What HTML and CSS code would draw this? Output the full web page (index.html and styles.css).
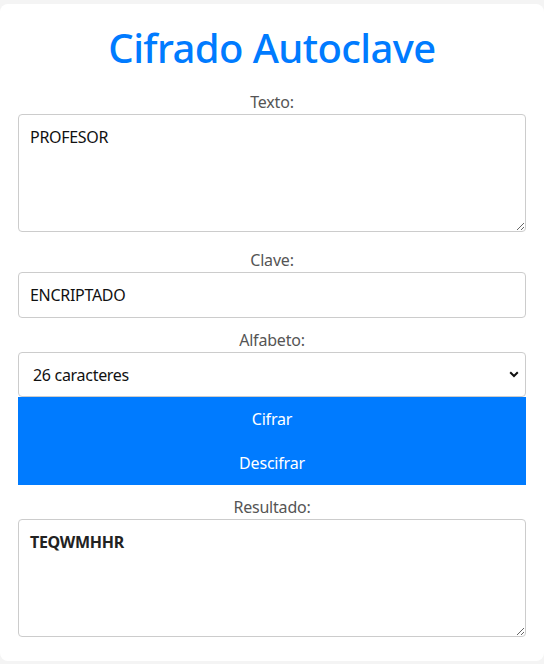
FILE: index.html
```html
<!DOCTYPE html>
<html lang="es">
<head>
<meta charset="utf-8">
<title>Cifrado Autoclave</title>
<link rel="stylesheet" href="styles.css">
</head>
<body>
<main class="card">
  <h1 class="title">Cifrado Autoclave</h1>
  <label class="label" for="texto">Texto:</label>
  <textarea id="texto" class="field area">PROFESOR</textarea>
  <label class="label" for="clave">Clave:</label>
  <input id="clave" class="field line" type="text" value="ENCRIPTADO">
  <label class="label" for="alfabeto">Alfabeto:</label>
  <div class="select-wrap">
    <select id="alfabeto" class="field select">
      <option>26 caracteres</option>
      <option>27 caracteres</option>
    </select>
    <svg class="chev" width="10" height="7" viewBox="0 0 10 7"><path d="M1.2 1.3 L5 5 L8.8 1.3" fill="none" stroke="#111" stroke-width="2"/></svg>
  </div>
  <button class="btn" type="button">Cifrar</button>
  <button class="btn" type="button">Descifrar</button>
  <label class="label result-label" for="resultado">Resultado:</label>
  <textarea id="resultado" class="field area result">TEQWMHHR</textarea>
</main>
</body>
</html>
```

FILE: styles.css
```css
html, body {
  margin: 0;
  padding: 0;
}
body {
  background: #f4f4f4;
  font-family: "Noto Sans", "Open Sans", sans-serif;
  font-size: 16px;
  line-height: 24px;
  padding-top: 4px;
}
.card {
  background: #fff;
  border-radius: 8px;
  padding: 20px 18px 18px;
  display: flex;
  flex-direction: column;
  box-sizing: border-box;
  height: 657px;
}
.title {
  margin: 0 0 18px;
  font-size: 40px;
  line-height: 48px;
  font-weight: 500;
  letter-spacing: -0.6px;
  color: #007bff;
  text-align: center;
}
.label {
  display: block;
  text-align: center;
  color: #555;
  font-size: 16px;
  line-height: 24px;
  letter-spacing: -0.2px;
}
.field {
  font-family: inherit;
  font-size: 16px;
  line-height: 24px;
  letter-spacing: -0.3px;
  color: #111;
  background: #fff;
  border: 1px solid #ccc;
  border-radius: 4px;
  padding: 10px 12px 10px 11px;
  box-sizing: border-box;
  width: 100%;
  margin: 0;
  outline: none;
}
.area {
  height: 118px;
  resize: vertical;
  margin-bottom: 16px;
}
.line {
  height: 46px;
  margin-bottom: 10px;
}
.select-wrap {
  position: relative;
}
.select {
  -webkit-appearance: none;
  appearance: none;
  height: 45px;
  padding: 10px 12px 10px 14px;
  display: block;
}
.chev {
  position: absolute;
  right: 7px;
  top: 19px;
  pointer-events: none;
}
.btn {
  display: block;
  width: 100%;
  height: 44px;
  border: 0;
  border-radius: 0;
  background: #007bff;
  color: #fff;
  font-family: inherit;
  font-size: 16px;
  line-height: 24px;
  letter-spacing: -0.2px;
  padding: 0;
  margin: 0;
}
.btn + .btn + .label {
  margin-top: 10px;
}
.result {
  font-weight: 700;
  color: #222;
  margin-bottom: 0;
}
```
